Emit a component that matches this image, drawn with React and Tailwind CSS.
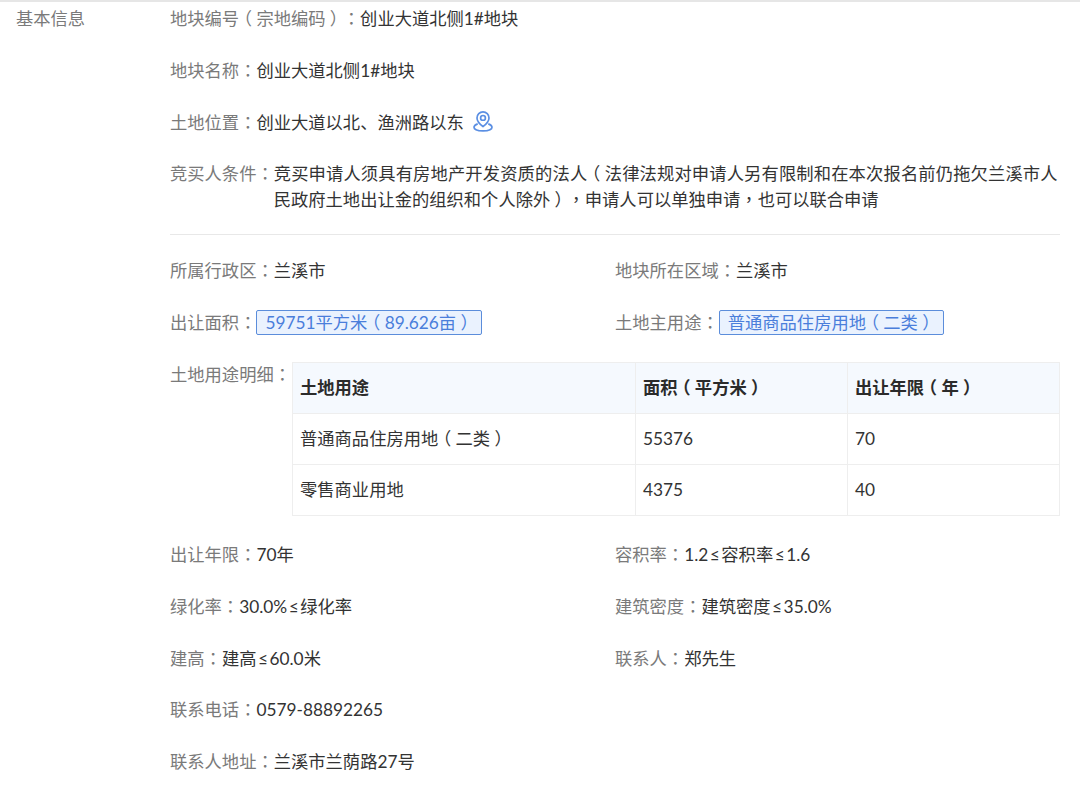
const FONT = "font-['Lato','Noto_Sans_CJK_SC',sans-serif]";

// the reference centres full-width punctuation: halt trims the glyph to half an em, margins put the room back
function Punct({ text }) {
  return text.split(/([（）：，≤])/).map((part, i) => {
    if (part === "（" || part === "）") {
      return <span key={i} className="mx-[0.25em] leading-none [font-feature-settings:'halt']">{part}</span>;
    }
    if (part === "：" || part === "，") {
      return <span key={i} className="font-['Noto_Sans_CJK_TC',sans-serif] leading-none">{part}</span>;
    }
    if (part === "≤") return <span key={i} className="mx-[1.5px]">{part}</span>;
    return part;
  });
}

function Label({ children, className = "" }) {
  return <span className={`shrink-0 text-[#7a7a7a] ${className}`}><Punct text={children} /></span>;
}

function Field({ label, children, className = "" }) {
  return (
    <div className={`flex items-start ${className}`}>
      <Label>{label}</Label>
      <div className="text-[#333333]">{typeof children === "string" ? <Punct text={children} /> : children}</div>
    </div>
  );
}

function Tag({ children }) {
  return (
    <span className="inline-block h-[25px] whitespace-nowrap rounded-[2px] border border-[#5b8ddb] bg-[#eaf2fe] px-2 leading-[23px] text-[#4a7edb]">
      <Punct text={children} />
    </span>
  );
}

function PinIcon() {
  return (
    <svg width="24" height="24" viewBox="0 0 20 20" fill="none" stroke="#5b8fe3" strokeWidth="1.4" className="-mt-px ml-[7px] shrink-0">
      <path d="M10 14.6c-2.9-2.2-5-4.4-5-7.2a5 5 0 0 1 10 0c0 2.8-2.1 5-5 7.2z" />
      <circle cx="10" cy="7.4" r="2" />
      <path d="M5.6 12.4c-2 .7-3.1 1.6-3.1 2.9 0 1.8 3.4 3 7.5 3s7.5-1.2 7.5-3c0-1.3-1.1-2.2-3.1-2.9" />
    </svg>
  );
}

const USAGE_ROWS = [
  { name: "普通商品住房用地（二类）", area: "55376", years: "70" },
  { name: "零售商业用地", area: "4375", years: "40" },
];

function UsageTable() {
  return (
    <table className="w-[768px] table-fixed border-collapse text-[#333333]">
      <thead>
        <tr className="h-[51px] bg-[#f5f9fe] font-bold text-[#2b2b2b]">
          <th className="w-[343px] border border-[#eeeeee] px-[7px] text-left">土地用途</th>
          <th className="w-[212px] border border-[#eeeeee] px-[7px] text-left"><Punct text="面积（平方米）" /></th>
          <th className="border border-[#eeeeee] px-[7px] text-left"><Punct text="出让年限（年）" /></th>
        </tr>
      </thead>
      <tbody>
        {USAGE_ROWS.map((row) => (
          <tr key={row.name} className="h-[51px]">
            <td className="border border-[#eeeeee] px-[7px]"><Punct text={row.name} /></td>
            <td className="border border-[#eeeeee] px-[7px]">{row.area}</td>
            <td className="border border-[#eeeeee] px-[7px]">{row.years}</td>
          </tr>
        ))}
      </tbody>
    </table>
  );
}

export default function App() {
  return (
    <div className={`h-[789px] w-[1080px] overflow-hidden bg-white text-[17.3px] leading-[26px] [text-spacing-trim:space-all] ${FONT}`}>
      <div className="h-[2px] bg-[#e6e6e6]" />
      <div className="flex pt-[4px]">
        <div className="w-[170px] shrink-0 pl-4 text-[#7a7a7a]">基本信息</div>
        <div className="flex w-[890px] flex-col">
          <div className="flex flex-col gap-[25.75px]">
            <Field label="地块编号（宗地编码）：">创业大道北侧1#地块</Field>
            <Field label="地块名称：">创业大道北侧1#地块</Field>
            <Field label="土地位置：">
              <div className="flex items-start">
                创业大道以北、渔洲路以东
                <PinIcon />
              </div>
            </Field>
            <Field label="竞买人条件：">
              <div className="whitespace-nowrap tracking-[0.14px]">
                <Punct text="竞买申请人须具有房地产开发资质的法人（法律法规对申请人另有限制和在本次报名前仍拖欠兰溪市人" />
              </div>
              <div>
                <Punct text="民政府土地出让金的组织和个人除外），申请人可以单独申请，也可以联合申请" />
              </div>
            </Field>
          </div>

          <div className="mt-[21px] h-px bg-[#e8e8e8]" />

          <div className="mt-[23px] grid grid-cols-2 gap-y-[25.75px]">
            <Field label="所属行政区：">兰溪市</Field>
            <Field label="地块所在区域：">兰溪市</Field>
            <Field label="出让面积：">
              <Tag>59751平方米（89.626亩）</Tag>
            </Field>
            <Field label="土地主用途：">
              <Tag>普通商品住房用地（二类）</Tag>
            </Field>
          </div>

          <div className="mt-[26px] flex">
            <Label className="w-[122px]">土地用途明细：</Label>
            <UsageTable />
          </div>

          <div className="mt-[26px] grid grid-cols-2 gap-y-[25.75px]">
            <Field label="出让年限：">70年</Field>
            <Field label="容积率：">1.2≤容积率≤1.6</Field>
            <Field label="绿化率：">30.0%≤绿化率</Field>
            <Field label="建筑密度：">建筑密度≤35.0%</Field>
            <Field label="建高：">建高≤60.0米</Field>
            <Field label="联系人：">郑先生</Field>
            <Field label="联系电话：" className="col-span-2">0579-88892265</Field>
            <Field label="联系人地址：" className="col-span-2">兰溪市兰荫路27号</Field>
          </div>
        </div>
      </div>
    </div>
  );
}
